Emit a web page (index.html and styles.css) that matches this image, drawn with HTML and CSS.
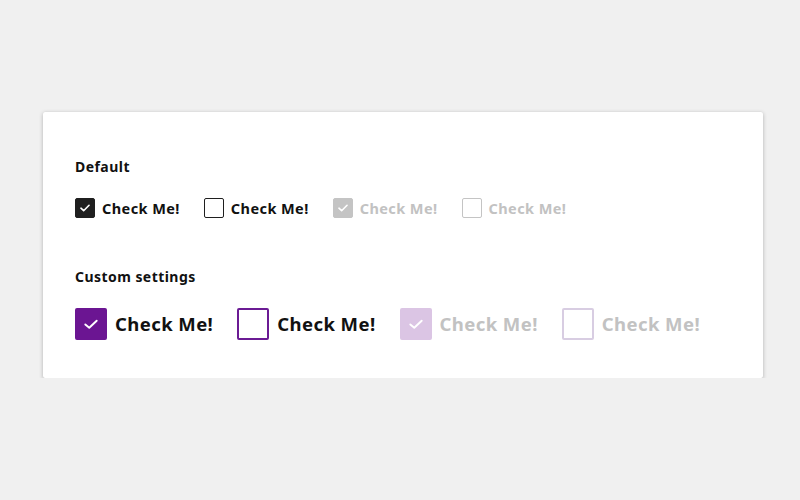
FILE: index.html
```html
<!DOCTYPE html>
<html>
<head>
<meta charset="utf-8">
<link rel="stylesheet" href="styles.css">
</head>
<body>
<div class="card">
  <div class="section">
    <div class="heading">Default</div>
    <div class="row">
      <label class="cb">
        <span class="box checked"><svg viewBox="0 0 20 20"><path d="M5.5 10.2l3 2.8 6-6" /></svg></span>
        <span class="lbl">Check Me!</span>
      </label>
      <label class="cb">
        <span class="box"></span>
        <span class="lbl">Check Me!</span>
      </label>
      <label class="cb disabled">
        <span class="box checked"><svg viewBox="0 0 20 20"><path d="M5.5 10.2l3 2.8 6-6" /></svg></span>
        <span class="lbl">Check Me!</span>
      </label>
      <label class="cb disabled">
        <span class="box"></span>
        <span class="lbl">Check Me!</span>
      </label>
    </div>
  </div>
  <div class="section">
    <div class="heading">Custom settings</div>
    <div class="row big">
      <label class="cb">
        <span class="box checked"><svg viewBox="0 0 32 32"><path d="M9.5 16.5l4.5 3.8 8.5-8" /></svg></span>
        <span class="lbl">Check Me!</span>
      </label>
      <label class="cb">
        <span class="box"></span>
        <span class="lbl">Check Me!</span>
      </label>
      <label class="cb disabled">
        <span class="box checked"><svg viewBox="0 0 32 32"><path d="M9.5 16.5l4.5 3.8 8.5-8" /></svg></span>
        <span class="lbl">Check Me!</span>
      </label>
      <label class="cb disabled">
        <span class="box"></span>
        <span class="lbl">Check Me!</span>
      </label>
    </div>
  </div>
</div>
</body>
</html>
```
FILE: styles.css
```css
html, body {
  margin: 0;
  padding: 0;
  background: #f0f0f0;
  font-family: "Noto Sans", "Open Sans", sans-serif;
}
body {
  padding: 112px 37px 0 43px;
}
.card {
  width: 720px;
  height: 266px;
  box-sizing: border-box;
  background: #fff;
  border-radius: 2px;
  box-shadow: 0 1.5px 4px rgba(0,0,0,0.24), 0 0 1px rgba(0,0,0,0.08);
  padding: 45px 32px 0 32px;
}
.section {
  margin-bottom: 49px;
}
.heading {
  font-size: 14px;
  font-weight: 700;
  color: #111;
  line-height: 20px;
  letter-spacing: 0.45px;
  margin-bottom: 21px;
}
.row {
  display: flex;
  gap: 24px;
  align-items: center;
}
.cb {
  display: flex;
  align-items: center;
  gap: 7px;
}
.box {
  width: 20px;
  height: 20px;
  box-sizing: border-box;
  border: 1.5px solid #1f1f1f;
  border-radius: 2px;
  display: flex;
}
.box.checked {
  background: #1f1f1f;
  border-color: #1f1f1f;
}
.box svg {
  width: 100%;
  height: 100%;
  display: block;
}
.box svg path {
  fill: none;
  stroke: #fff;
  stroke-width: 1.8;
  stroke-linecap: round;
  stroke-linejoin: round;
}
.lbl {
  font-size: 14.5px;
  font-weight: 700;
  color: #111;
  line-height: 20px;
  letter-spacing: 0.42px;
}
.disabled .box {
  border-color: #c4c4c4;
}
.disabled .box.checked {
  background: #c4c4c4;
}
.disabled .lbl {
  color: #c2c2c2;
}
.big .cb {
  gap: 8px;
}
.big .box {
  width: 32px;
  height: 32px;
  border: 2px solid #6b1b94;
}
.big .box.checked {
  background: #6b1592;
  border-color: #6b1592;
}
.big .lbl {
  font-size: 18.5px;
  line-height: 32px;
  letter-spacing: 0.42px;
}
.big .disabled .box {
  border-color: #d8cde2;
}
.big .disabled .box.checked {
  background: #dbc5e4;
  border-color: #dbc5e4;
}
.big .box svg path {
  stroke-width: 2.2;
}
```
